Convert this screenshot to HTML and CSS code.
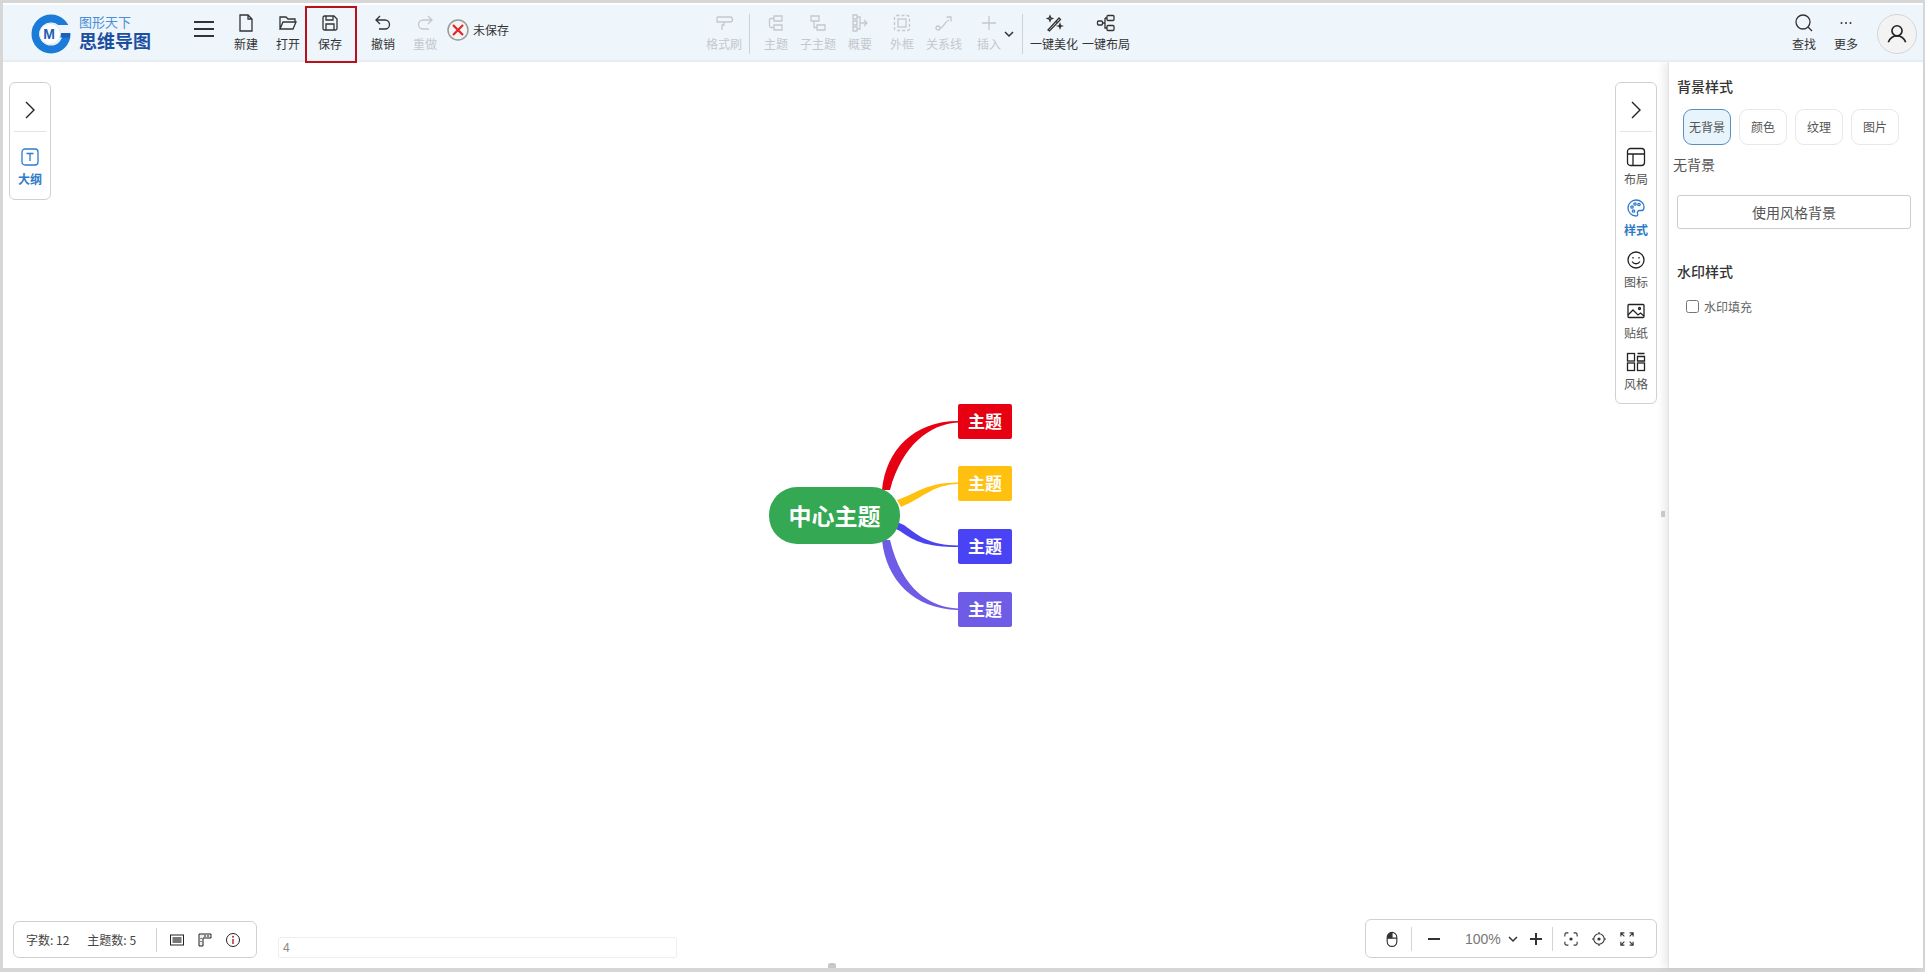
FILE: index.html
```html
<!DOCTYPE html>
<html lang="zh-CN">
<head>
    <meta charset="UTF-8">
    <title>思维导图</title>
    <link rel="stylesheet" href="styles.css">
</head>
<body>
<div class="frame">
    <header class="toolbar">
        <div class="logo">
            <svg class="logo-mark" viewBox="0 0 40 42">
                <circle cx="20" cy="21" r="15.5" fill="none" stroke="#1b7bd8" stroke-width="8"/>
                <rect x="22" y="12" width="20" height="8" fill="#eef5fb"/>
                <path d="M22 20h17v4.500H22z" fill="#1b5fb8"/>
                <circle cx="19" cy="21" r="10.500" fill="#fff" stroke="#dbe7f3"/>
                <text x="18" y="26" class="logo-mg">M</text>
            </svg>
            <div class="logo-text">
                <span class="logo-top">图形天下</span>
                <span class="logo-name">思维导图</span>
            </div>
        </div>
        <div class="burger"><i></i><i></i><i></i></div>

        <div class="tool">
            <svg class="ic" viewBox="0 0 20 20"><path d="M4 2h8l4 4v12H4zM12 2v4h4"/></svg>
            <span>新建</span>
        </div>
        <div class="tool">
            <svg class="ic" viewBox="0 0 20 20"><path d="M2 16V4h6l2 2h7v3M2 16l3-7h13l-3 7z"/></svg>
            <span>打开</span>
        </div>
        <div class="tool tool-save">
            <svg class="ic" viewBox="0 0 20 20"><path d="M3 4.500a1.500 1.500 0 0 1 1.500-1.500H14l3 3v9.500a1.500 1.500 0 0 1-1.500 1.500h-11A1.500 1.500 0 0 1 3 15.500zM6 3v4h7V3M6 17v-6h8v6"/></svg>
            <span>保存</span>
        </div>
        <div class="tool tool-undo">
            <svg class="ic" viewBox="0 0 20 20"><path d="M7 3L3 7l4 4M3 7h9a4.500 4.500 0 0 1 0 9H6"/></svg>
            <span>撤销</span>
        </div>
        <div class="tool off">
            <svg class="ic" viewBox="0 0 20 20"><path d="M13 3l4 4-4 4M17 7H8a4.500 4.500 0 0 0 0 9h6"/></svg>
            <span>重做</span>
        </div>
        <div class="save-state">
            <svg class="state-ic" viewBox="0 0 22 22">
                <circle cx="11" cy="11" r="10" fill="#f4f4f4" stroke="#9a9a9a" stroke-width="1.500"/>
                <path d="M6 6l10 10M16 6L6 16" stroke="#e0262b" stroke-width="2.200" fill="none"/>
            </svg>
            <span>未保存</span>
        </div>

        <div class="tool off tool-brush">
            <svg class="ic" viewBox="0 0 20 20"><path d="M3 4h13a2 2 0 0 1 0 5h-6v3H8v5M3 4v5h7"/></svg>
            <span>格式刷</span>
        </div>
        <div class="sep"></div>
        <div class="tool off">
            <svg class="ic" viewBox="0 0 20 20"><path d="M8 3h8v5H8zM8 12h8v5H8zM8 5.500H5a1.500 1.500 0 0 0-1.500 1.500v6A1.500 1.500 0 0 0 5 14.500h3"/></svg>
            <span>主题</span>
        </div>
        <div class="tool off">
            <svg class="ic" viewBox="0 0 20 20"><path d="M3 3h8v5H3zM9 12h8v5H9zM6 8v6.500h3"/></svg>
            <span>子主题</span>
        </div>
        <div class="tool off">
            <svg class="ic" viewBox="0 0 20 20"><path d="M3 2h4v4H3zM3 8h4v4H3zM3 14h4v4H3zM7 4h3v12H7M10 10h7M14 7l3 3-3 3"/></svg>
            <span>概要</span>
        </div>
        <div class="tool off">
            <svg class="ic" viewBox="0 0 20 20"><rect x="6" y="6" width="8" height="8"/><rect x="2.500" y="2.500" width="15" height="15" rx="2" stroke-dasharray="3 2"/></svg>
            <span>外框</span>
        </div>
        <div class="tool off">
            <svg class="ic" viewBox="0 0 20 20"><circle cx="4" cy="15" r="2"/><path d="M6 15c4 0 4-6 9-8M12.500 4H17v4.500"/></svg>
            <span>关系线</span>
        </div>
        <div class="tool off tool-insert">
            <svg class="ic" viewBox="0 0 20 20"><path d="M10 3v14M3 10h14"/></svg>
            <span>插入</span>
        </div>
        <svg class="insert-arrow" viewBox="0 0 12 8"><path d="M2 2l4 4 4-4"/></svg>
        <div class="sep sep-b"></div>
        <div class="tool tool-wide">
            <svg class="ic" viewBox="0 0 20 20"><path d="M4 17L15 5l1.500 1.500L5.500 18zM12 8l2 2M6 3l.7 1.800L8.500 5.500l-1.800.7L6 8l-.7-1.800L3.500 5.500l1.800-.7zM16 11l.5 1.500L18 13l-1.500.5L16 15l-.5-1.500L14 13l1.500-.5z"/></svg>
            <span>一键美化</span>
        </div>
        <div class="tool tool-wide">
            <svg class="ic" viewBox="0 0 20 20"><rect x="1.500" y="8" width="5" height="4" rx="1"/><rect x="11" y="2.500" width="7" height="5" rx="1"/><rect x="11" y="12.500" width="7" height="5" rx="1"/><path d="M6.500 10H9M9 5v10h2M9 5h2"/></svg>
            <span>一键布局</span>
        </div>

        <div class="tool tool-find">
            <svg class="ic" viewBox="0 0 20 20"><circle cx="9" cy="9" r="7"/><path d="M14 14l4 4"/></svg>
            <span>查找</span>
        </div>
        <div class="tool">
            <svg class="ic" viewBox="0 0 20 20"><circle cx="5.500" cy="10" r="1" class="dot"/><circle cx="10" cy="10" r="1" class="dot"/><circle cx="14.500" cy="10" r="1" class="dot"/></svg>
            <span>更多</span>
        </div>
        <div class="avatar">
            <svg viewBox="0 0 24 24"><circle cx="12" cy="8.500" r="5.500"/><path d="M2.500 21c2-5 5-7 9.500-7s7.500 2 9.500 7"/></svg>
        </div>
    </header>

    <div class="main">
        <div class="canvas">
            <svg class="links" viewBox="3 62 1665 906">
                <path fill="#e60012" d="M882 490C886 450 914 421 958 421V422.500C930 424 902 445 890 490Z"/>
                <path fill="#ffc010" d="M897 500C920 492 925 483 958 482.500V484C932 485 925 497 901 507Z"/>
                <path fill="#4a43f0" d="M897 522L904 525C920 537 930 545 958 545.500V547C928 547 915 542 900 531L896 529Z"/>
                <path fill="#6e5ce6" d="M882 540C886 580 914 609 958 610V608.500C930 607 902 590 890 540Z"/>
            </svg>
            <div class="root">中心主题</div>
            <div class="topic topic-1">主题</div>
            <div class="topic topic-2">主题</div>
            <div class="topic topic-3">主题</div>
            <div class="topic topic-4">主题</div>

            <aside class="rail rail-left">
                <div class="rail-head"><svg viewBox="0 0 20 20"><path d="M6 2l8 8-8 8"/></svg></div>
                <div class="rail-item active">
                    <svg class="ic" viewBox="0 0 20 20"><rect x="2" y="2" width="16" height="16" rx="3"/><path d="M6.500 6.500h7M10 6.500V14"/></svg>
                    <span>大纲</span>
                </div>
            </aside>

            <aside class="rail rail-right">
                <div class="rail-head"><svg viewBox="0 0 20 20"><path d="M6 2l8 8-8 8"/></svg></div>
                <div class="rail-item">
                    <svg class="ic" viewBox="0 0 20 20"><rect x="1.500" y="1.500" width="17" height="17" rx="3"/><path d="M1.500 7h17M7 7v11.500"/></svg>
                    <span>布局</span>
                </div>
                <div class="rail-item active">
                    <svg class="ic" viewBox="0 0 20 20"><path d="M10 2a8 8 0 0 0 0 16c2 0 2-1.500 1.500-2.500S11.500 12.500 14 12.500h2c2 0 2-2 2-3.500C18 5 14.500 2 10 2z"/><circle cx="6" cy="9" r="1.200"/><circle cx="9" cy="6" r="1.200"/><circle cx="13" cy="6.500" r="1.200"/><circle cx="7.500" cy="13" r="1.200"/></svg>
                    <span>样式</span>
                </div>
                <div class="rail-item">
                    <svg class="ic" viewBox="0 0 20 20"><circle cx="10" cy="10" r="8"/><path d="M6 11.500c2 3 6 3 8 0M7 7v1.500M13 7v1.500"/></svg>
                    <span>图标</span>
                </div>
                <div class="rail-item">
                    <svg class="ic" viewBox="0 0 20 20"><rect x="2" y="3.500" width="16" height="13" rx="1"/><path d="M2 14l5-5 5 5 2.500-2 3.500 3"/><circle cx="13.500" cy="7.500" r="1"/></svg>
                    <span>贴纸</span>
                </div>
                <div class="rail-item">
                    <svg class="ic" viewBox="0 0 20 20"><rect x="1.500" y="1.500" width="7" height="7.500"/><rect x="1.500" y="11" width="7" height="7.500"/><rect x="11.500" y="11" width="7" height="7.500"/><path d="M11.500 1.500h7M11.500 4.500h7V9h-7z"/></svg>
                    <span>风格</span>
                </div>
            </aside>

            <div class="status">
                <span class="status-count">字数: 12</span>
                <span class="status-count">主题数: 5</span>
                <div class="status-sep"></div>
                <svg class="st-ic" viewBox="0 0 16 16"><rect x="1.500" y="3" width="13" height="10" fill="#fff" stroke="#222"/><rect x="3.500" y="5" width="9" height="6" fill="#777"/></svg>
                <svg class="st-ic" viewBox="0 0 16 16"><path d="M2 2h12v4H6v8H2z" fill="#eee" stroke="#222"/><path d="M4 6v1M4 9v1M8 3v2M11 3v2" stroke="#222"/></svg>
                <svg class="st-ic" viewBox="0 0 16 16"><circle cx="8" cy="8" r="6.500" fill="none" stroke="#222"/><path d="M8 7v5" stroke="#a33" stroke-width="1.500"/><circle cx="8" cy="4.800" r="1" fill="#a33"/></svg>
            </div>
            <div class="note">4</div>

            <div class="zoom-bar">
                <svg class="zb-ic zb-mouse" viewBox="0 0 16 18"><path d="M2.500 7a5.500 5.500 0 0 1 11 0v5a5 5 0 0 1-11 0zM2.500 8h11"/><path d="M3 7.500a5 5 0 0 1 5-5.500v5.500z" class="zb-fill"/></svg>
                <div class="zb-sep"></div>
                <svg class="zb-ic zb-minus" viewBox="0 0 14 14"><path d="M1 7h12"/></svg>
                <span class="zb-value">100%</span>
                <svg class="zb-arrow" viewBox="0 0 12 8"><path d="M2 2l4 4 4-4"/></svg>
                <svg class="zb-ic zb-plus" viewBox="0 0 14 14"><path d="M1 7h12M7 1v12"/></svg>
                <div class="zb-sep"></div>
                <svg class="zb-ic zb-fit" viewBox="0 0 16 16"><path d="M1 5V3a2 2 0 0 1 2-2h2M11 1h2a2 2 0 0 1 2 2v2M15 11v2a2 2 0 0 1-2 2h-2M5 15H3a2 2 0 0 1-2-2v-2"/><circle cx="8" cy="8" r="1.200" class="zb-fill"/></svg>
                <svg class="zb-ic zb-center" viewBox="0 0 16 16"><circle cx="8" cy="8" r="6"/><circle cx="8" cy="8" r="1.200" class="zb-fill"/><path d="M8 0v2M8 14v2M0 8h2M14 8h2"/></svg>
                <svg class="zb-ic zb-full" viewBox="0 0 16 16"><path d="M1 5V1h4M1 1l4 4M11 1h4v4M15 1l-4 4M15 11v4h-4M15 15l-4-4M5 15H1v-4M1 15l4-4"/></svg>
            </div>

            <div class="handle-bottom"></div>
            <div class="handle-side"></div>
        </div>

        <aside class="panel">
            <h3>背景样式</h3>
            <div class="tabs">
                <div class="tab selected">无背景</div>
                <div class="tab">颜色</div>
                <div class="tab">纹理</div>
                <div class="tab">图片</div>
            </div>
            <div class="bg-name">无背景</div>
            <button class="bg-btn">使用风格背景</button>
            <h3 class="mark-title">水印样式</h3>
            <label class="mark-check"><input type="checkbox">水印填充</label>
        </aside>
    </div>
</div>
</body>
</html>
```

FILE: styles.css
```css
* {
    box-sizing: border-box;
}
html, body {
    margin: 0;
    height: 100%;
    background: #fff;
    overflow: hidden;
}
body {
    font-family: "Noto Sans CJK SC", "Noto Sans", sans-serif;
    font-size: 12px;
    color: #333;
}
.frame {
    width: 1925px;
    height: 972px;
    padding-top: 2px;
    border-style: solid;
    border-color: #d6d6d6;
    border-width: 3px 2px 4px 3px;
    display: flex;
    flex-direction: column;
}

/* toolbar */
.toolbar {
    height: 57px;
    flex: none;
    display: flex;
    background: #eef5fb;
    box-shadow: inset 0 -3px 3px -2px rgba(0,0,0,0.07);
    position: relative;
    z-index: 2;
}
.logo {
    width: 120px;
    margin-left: 28px;
    display: flex;
    align-items: center;
    gap: 8px;
}
.logo-mark {
    width: 40px;
    height: 42px;
    flex: none;
}
.logo-mg {
    font-family: "Liberation Sans", sans-serif;
    font-size: 14px;
    font-weight: bold;
    fill: #1b5fb8;
    text-anchor: middle;
}
.logo-text {
    display: flex;
    flex-direction: column;
    gap: 1px;
    white-space: nowrap;
    margin-top: -3px;
}
.logo-top {
    font-size: 13px;
    line-height: 15px;
    color: #4a90d9;
}
.logo-name {
    font-size: 18px;
    line-height: 20px;
    font-weight: bold;
    color: #1d4fa0;
}
.burger {
    width: 20px;
    margin: 16px 0 0 43px;
    display: flex;
    flex-direction: column;
    gap: 5px;
}
.burger i {
    display: block;
    height: 2px;
    background: #333;
}
.tool {
    width: 42px;
    padding-top: 8px;
    flex: none;
    display: flex;
    flex-direction: column;
    align-items: center;
    color: #333;
}
.tool span {
    margin-top: 3px;
    line-height: 16px;
    white-space: nowrap;
}
.ic {
    display: block;
    width: 20px;
    height: 20px;
    flex: none;
    fill: none;
    stroke: currentColor;
    stroke-width: 1.3;
}
.dot {
    fill: currentColor;
    stroke: none;
}
.burger + .tool {
    margin-left: 11px;
}
.tool-save {
    position: relative;
}
.tool-save::after {
    content: "";
    position: absolute;
    left: -4px;
    right: -6px;
    top: 1px;
    bottom: -1px;
    border: 2px solid #b5121b;
}
.tool-undo {
    margin-left: 11px;
}
.off {
    color: #c4c8cc;
}
.save-state {
    display: flex;
    align-items: center;
    gap: 4px;
    width: 66px;
    margin: -8px 0 0 1px;
    white-space: nowrap;
}
.state-ic {
    width: 22px;
    height: 22px;
}
.tool-brush {
    margin-left: 190px;
}
.sep {
    width: 1px;
    height: 40px;
    margin: 9px 5px 0 4px;
    background: #ccd3da;
}
.tool-insert {
    margin-left: 3px;
}
.insert-arrow {
    width: 12px;
    height: 8px;
    margin: 25px 0 0 -7px;
    fill: none;
    stroke: #333;
    stroke-width: 1.5;
}
.sep-b {
    margin-left: 7px;
}
.tool-wide {
    width: 52px;
}
.tool-find {
    margin-left: auto;
}
.avatar {
    width: 40px;
    height: 40px;
    margin: 9px 6px 0 10px;
    border: 1px solid #d5d5d5;
    border-radius: 50%;
    background: #f3f3f3;
    display: flex;
    align-items: center;
    justify-content: center;
}
.avatar svg {
    width: 22px;
    height: 22px;
    fill: none;
    stroke: #222;
    stroke-width: 1.8;
}

/* main area */
.main {
    flex: 1;
    display: flex;
    min-height: 0;
}
.canvas {
    width: 1665px;
    position: relative;
    background: #fff;
}
.links {
    position: absolute;
    left: 0;
    top: 0;
    width: 1665px;
    height: 906px;
}
.root {
    position: absolute;
    left: 766px;
    top: 425px;
    width: 131px;
    height: 57px;
    border-radius: 28px;
    background: #34a853;
    color: #fff;
    font-size: 23px;
    font-weight: bold;
    line-height: 56px;
    text-align: center;
}
.topic {
    position: absolute;
    left: 955px;
    width: 54px;
    height: 35px;
    border-radius: 2px;
    color: #fff;
    font-size: 17px;
    font-weight: bold;
    line-height: 34px;
    text-align: center;
}
.topic-1 { top: 342px; background: #e60012; }
.topic-2 { top: 404px; background: #ffc010; }
.topic-3 { top: 467px; background: #4a43f5; }
.topic-4 { top: 530px; background: #6e5ce6; }

.rail {
    position: absolute;
    top: 20px;
    width: 42px;
    background: #fff;
    border: 1px solid #d0d0d0;
    border-radius: 6px;
}
.rail-left {
    left: 6px;
    height: 118px;
}
.rail-right {
    right: 11px;
    height: 322px;
}
.rail-head {
    height: 49px;
    padding-top: 5px;
    margin: 0 4px 4px;
    border-bottom: 1px solid #e2e2e2;
    display: flex;
    align-items: center;
    justify-content: center;
}
.rail-head svg {
    width: 20px;
    height: 20px;
    fill: none;
    stroke: #222;
    stroke-width: 1.4;
}
.rail-item {
    height: 51.3px;
    padding-top: 11px;
    display: flex;
    flex-direction: column;
    align-items: center;
    color: #555;
}
.rail-item .ic {
    color: #222;
}
.rail-item span {
    margin-top: 4px;
    line-height: 16px;
}
.rail-item.active span {
    color: #2f7bc8;
    font-weight: bold;
}
.rail-item.active .ic {
    color: #2f7bc8;
}

.status {
    position: absolute;
    left: 10px;
    bottom: 10px;
    width: 244px;
    height: 37px;
    padding-left: 12px;
    border: 1px solid #d0d0d0;
    border-radius: 6px;
    background: #fff;
    display: flex;
    align-items: center;
    color: #444;
}
.status-count {
    margin-right: 18px;
    white-space: nowrap;
}
.status-sep {
    width: 1px;
    height: 24px;
    margin: 0 12px 0 2px;
    background: #d0d0d0;
}
.st-ic {
    width: 16px;
    height: 16px;
    margin-right: 12px;
}
.note {
    position: absolute;
    left: 275px;
    bottom: 10px;
    width: 399px;
    height: 21px;
    padding-left: 4px;
    border: 1px solid #eee;
    border-radius: 3px;
    color: #888;
    line-height: 20px;
    font-family: "Liberation Sans", sans-serif;
}

.zoom-bar {
    position: absolute;
    right: 11px;
    bottom: 10px;
    width: 292px;
    height: 39px;
    padding-left: 19px;
    border: 1px solid #d0d0d0;
    border-radius: 6px;
    background: #fff;
    display: flex;
    align-items: center;
}
.zb-ic {
    width: 14px;
    height: 14px;
    fill: none;
    stroke: #333;
    stroke-width: 1.3;
    flex: none;
}
.zb-fill {
    fill: #333;
}
.zb-mouse {
    height: 16px;
}
.zb-sep {
    width: 1px;
    height: 24px;
    background: #d5d5d5;
    flex: none;
}
.zb-mouse + .zb-sep {
    margin: 0 15px 0 12px;
}
.zb-minus {
    stroke-width: 2;
}
.zb-value {
    margin-left: 24px;
    font-size: 14px;
    color: #777;
    font-family: "Liberation Sans", sans-serif;
    width: 38px;
}
.zb-arrow {
    width: 12px;
    height: 8px;
    margin-left: 4px;
    fill: none;
    stroke: #333;
    stroke-width: 1.5;
}
.zb-plus {
    margin-left: 10px;
    stroke-width: 2;
}
.zb-plus + .zb-sep {
    margin: 0 11px 0 9px;
}
.zb-center {
    margin-left: 14px;
}
.zb-full {
    margin-left: 14px;
}

.handle-bottom {
    position: absolute;
    left: 825px;
    bottom: 0;
    width: 8px;
    height: 5px;
    background: #c8c8c8;
    border-radius: 2px 2px 0 0;
}
.handle-side {
    position: absolute;
    right: 3px;
    top: 449px;
    width: 4px;
    height: 6px;
    background: #d0d0d0;
}

/* right panel */
.panel {
    flex: 1;
    padding: 14px 0 0 8px;
    border-left: 1px solid #e2e2e2;
    box-shadow: -4px 0 8px rgba(0,0,0,0.09);
    background: #fff;
    position: relative;
}
.panel h3 {
    margin: 0;
    font-size: 14px;
    font-weight: 500;
    line-height: 20px;
    color: #333;
}
.tabs {
    margin: 13px 0 0 6px;
    display: flex;
    gap: 8px;
}
.tab {
    width: 48px;
    height: 36px;
    border: 1px solid #e8e8e8;
    border-radius: 9px;
    color: #555;
    line-height: 34px;
    text-align: center;
}
.tab.selected {
    background: #e8f4fc;
    border-color: #5b8fc0;
}
.bg-name {
    margin: 9px 0 0 -4px;
    font-size: 14px;
    line-height: 20px;
    color: #555;
}
.bg-btn {
    display: block;
    width: 234px;
    height: 34px;
    margin-top: 21px;
    padding: 0;
    border: 1px solid #ccc;
    border-radius: 3px;
    background: #fff;
    color: #555;
    font-family: inherit;
    font-size: 14px;
}
.panel .mark-title {
    margin-top: 32px;
}
.mark-check {
    margin: 17px 0 0 9px;
    height: 16px;
    display: flex;
    align-items: center;
    color: #666;
}
.mark-check input {
    width: 13px;
    height: 13px;
    margin: 0 5px 0 0;
}
```
